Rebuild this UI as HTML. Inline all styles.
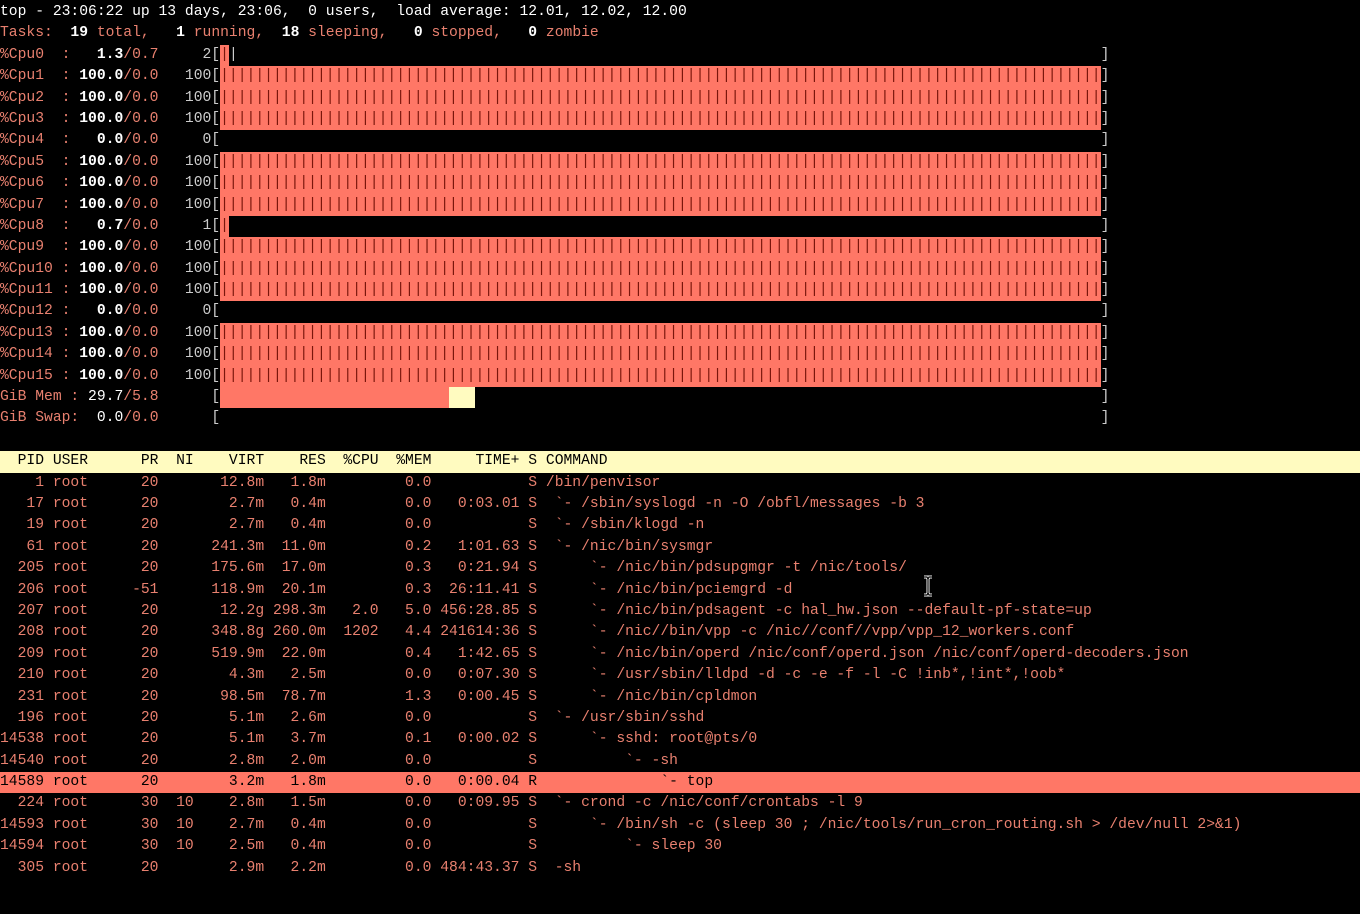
<!DOCTYPE html>
<html><head><meta charset="utf-8"><style>
html,body{margin:0;padding:0;background:#000;}
body{width:1360px;height:914px;overflow:hidden;position:relative;}
pre{margin:0;padding-top:2px;font-family:"Liberation Mono",monospace;font-size:14.68px;line-height:21.4px;color:#e8806f;white-space:pre;}
.l{display:block;height:21.4px;}
.w{color:#fff;font-weight:bold;}
.n{color:#fff;}
.g{color:#ccc;}
.b{background:#ff7766;color:#7a160c;display:inline-block;height:21.4px;vertical-align:top;}
.y{background:#fffbc0;display:inline-block;height:21.4px;vertical-align:top;}
.e{display:inline-block;}
.hd{background:#fffbc0;color:#000;}
.hl{background:#ff7766;color:#000;}
</style></head><body><pre><span class="l n">top - 23:06:22 up 13 days, 23:06,  0 users,  load average: 12.01, 12.02, 12.00</span><span class="l">Tasks:<span class="w">  19</span> total,<span class="w">   1</span> running,<span class="w">  18</span> sleeping,<span class="w">   0</span> stopped,<span class="w">   0</span> zombie</span><span class="l">%Cpu0  :<span class="w">   1.3</span>/0.7<span class="g">     2[</span><span class="b">|</span><span class="g">|</span><span class="e" style="width:98ch"></span><span class="g">]</span></span><span class="l">%Cpu1  :<span class="w"> 100.0</span>/0.0<span class="g">   100[</span><span class="b">||||||||||||||||||||||||||||||||||||||||||||||||||||||||||||||||||||||||||||||||||||||||||||||||||||</span><span class="g">]</span></span><span class="l">%Cpu2  :<span class="w"> 100.0</span>/0.0<span class="g">   100[</span><span class="b">||||||||||||||||||||||||||||||||||||||||||||||||||||||||||||||||||||||||||||||||||||||||||||||||||||</span><span class="g">]</span></span><span class="l">%Cpu3  :<span class="w"> 100.0</span>/0.0<span class="g">   100[</span><span class="b">||||||||||||||||||||||||||||||||||||||||||||||||||||||||||||||||||||||||||||||||||||||||||||||||||||</span><span class="g">]</span></span><span class="l">%Cpu4  :<span class="w">   0.0</span>/0.0<span class="g">     0[</span><span class="e" style="width:100ch"></span><span class="g">]</span></span><span class="l">%Cpu5  :<span class="w"> 100.0</span>/0.0<span class="g">   100[</span><span class="b">||||||||||||||||||||||||||||||||||||||||||||||||||||||||||||||||||||||||||||||||||||||||||||||||||||</span><span class="g">]</span></span><span class="l">%Cpu6  :<span class="w"> 100.0</span>/0.0<span class="g">   100[</span><span class="b">||||||||||||||||||||||||||||||||||||||||||||||||||||||||||||||||||||||||||||||||||||||||||||||||||||</span><span class="g">]</span></span><span class="l">%Cpu7  :<span class="w"> 100.0</span>/0.0<span class="g">   100[</span><span class="b">||||||||||||||||||||||||||||||||||||||||||||||||||||||||||||||||||||||||||||||||||||||||||||||||||||</span><span class="g">]</span></span><span class="l">%Cpu8  :<span class="w">   0.7</span>/0.0<span class="g">     1[</span><span class="b">|</span><span class="e" style="width:99ch"></span><span class="g">]</span></span><span class="l">%Cpu9  :<span class="w"> 100.0</span>/0.0<span class="g">   100[</span><span class="b">||||||||||||||||||||||||||||||||||||||||||||||||||||||||||||||||||||||||||||||||||||||||||||||||||||</span><span class="g">]</span></span><span class="l">%Cpu10 :<span class="w"> 100.0</span>/0.0<span class="g">   100[</span><span class="b">||||||||||||||||||||||||||||||||||||||||||||||||||||||||||||||||||||||||||||||||||||||||||||||||||||</span><span class="g">]</span></span><span class="l">%Cpu11 :<span class="w"> 100.0</span>/0.0<span class="g">   100[</span><span class="b">||||||||||||||||||||||||||||||||||||||||||||||||||||||||||||||||||||||||||||||||||||||||||||||||||||</span><span class="g">]</span></span><span class="l">%Cpu12 :<span class="w">   0.0</span>/0.0<span class="g">     0[</span><span class="e" style="width:100ch"></span><span class="g">]</span></span><span class="l">%Cpu13 :<span class="w"> 100.0</span>/0.0<span class="g">   100[</span><span class="b">||||||||||||||||||||||||||||||||||||||||||||||||||||||||||||||||||||||||||||||||||||||||||||||||||||</span><span class="g">]</span></span><span class="l">%Cpu14 :<span class="w"> 100.0</span>/0.0<span class="g">   100[</span><span class="b">||||||||||||||||||||||||||||||||||||||||||||||||||||||||||||||||||||||||||||||||||||||||||||||||||||</span><span class="g">]</span></span><span class="l">%Cpu15 :<span class="w"> 100.0</span>/0.0<span class="g">   100[</span><span class="b">||||||||||||||||||||||||||||||||||||||||||||||||||||||||||||||||||||||||||||||||||||||||||||||||||||</span><span class="g">]</span></span><span class="l">GiB Mem :<span class="n"> 29.7</span>/5.8<span class="g">      [</span><span class="b">                          </span><span class="y">   </span><span class="e" style="width:71ch"></span><span class="g">]</span></span><span class="l">GiB Swap:<span class="n">  0.0</span>/0.0<span class="g">      [</span><span class="e" style="width:100ch"></span><span class="g">]</span></span><span class="l"> </span><span class="l hd">  PID USER      PR  NI    VIRT    RES  %CPU  %MEM     TIME+ S COMMAND</span><span class="l">    1 root      20       12.8m   1.8m         0.0           S /bin/penvisor</span><span class="l">   17 root      20        2.7m   0.4m         0.0   0:03.01 S  `- /sbin/syslogd -n -O /obfl/messages -b 3</span><span class="l">   19 root      20        2.7m   0.4m         0.0           S  `- /sbin/klogd -n</span><span class="l">   61 root      20      241.3m  11.0m         0.2   1:01.63 S  `- /nic/bin/sysmgr</span><span class="l">  205 root      20      175.6m  17.0m         0.3   0:21.94 S      `- /nic/bin/pdsupgmgr -t /nic/tools/</span><span class="l">  206 root     -51      118.9m  20.1m         0.3  26:11.41 S      `- /nic/bin/pciemgrd -d</span><span class="l">  207 root      20       12.2g 298.3m   2.0   5.0 456:28.85 S      `- /nic/bin/pdsagent -c hal_hw.json --default-pf-state=up</span><span class="l">  208 root      20      348.8g 260.0m  1202   4.4 241614:36 S      `- /nic//bin/vpp -c /nic//conf//vpp/vpp_12_workers.conf</span><span class="l">  209 root      20      519.9m  22.0m         0.4   1:42.65 S      `- /nic/bin/operd /nic/conf/operd.json /nic/conf/operd-decoders.json</span><span class="l">  210 root      20        4.3m   2.5m         0.0   0:07.30 S      `- /usr/sbin/lldpd -d -c -e -f -l -C !inb*,!int*,!oob*</span><span class="l">  231 root      20       98.5m  78.7m         1.3   0:00.45 S      `- /nic/bin/cpldmon</span><span class="l">  196 root      20        5.1m   2.6m         0.0           S  `- /usr/sbin/sshd</span><span class="l">14538 root      20        5.1m   3.7m         0.1   0:00.02 S      `- sshd: root@pts/0</span><span class="l">14540 root      20        2.8m   2.0m         0.0           S          `- -sh</span><span class="l hl">14589 root      20        3.2m   1.8m         0.0   0:00.04 R              `- top</span><span class="l">  224 root      30  10    2.8m   1.5m         0.0   0:09.95 S  `- crond -c /nic/conf/crontabs -l 9</span><span class="l">14593 root      30  10    2.7m   0.4m         0.0           S      `- /bin/sh -c (sleep 30 ; /nic/tools/run_cron_routing.sh &gt; /dev/null 2&gt;&amp;1)</span><span class="l">14594 root      30  10    2.5m   0.4m         0.0           S          `- sleep 30</span><span class="l">  305 root      20        2.9m   2.2m         0.0 484:43.37 S  -sh</span></pre>
<svg style="position:absolute;left:921px;top:575px" width="14" height="22" viewBox="0 0 14 22"><path d="M3 2h3l1 2 1-2h3M7 4v14M3 20h3l1-2 1 2h3" fill="none" stroke="#fff" stroke-width="3"/><path d="M3 2h3l1 2 1-2h3M7 4v14M3 20h3l1-2 1 2h3" fill="none" stroke="#000" stroke-width="1.2"/></svg>
</body></html>
